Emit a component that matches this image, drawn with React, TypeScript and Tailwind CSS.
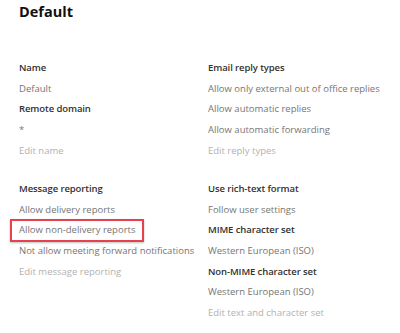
const font = { fontFamily: '"Open Sans", "Noto Sans", sans-serif' };

function Label({ children }: { children: React.ReactNode }) {
  return (
    <div className="h-[20.6px] flex items-center text-[9.5px] font-semibold text-[#323130] whitespace-nowrap tracking-[-0.1px]">
      {children}
    </div>
  );
}

function Value({ children }: { children: React.ReactNode }) {
  return (
    <div className="h-[20.6px] flex items-center text-[9.5px] text-[#777573] whitespace-nowrap">
      {children}
    </div>
  );
}

function EditLink({ children }: { children: React.ReactNode }) {
  return (
    <div className="h-[20.6px] flex items-center text-[9.5px] text-[#b3b1af] whitespace-nowrap">
      {children}
    </div>
  );
}

export default function App() {
  return (
    <div className="w-[400px] h-[333px] bg-white overflow-hidden" style={font}>
      <h1 className="pl-[19px] pt-[2px] text-[14.5px] font-bold text-[#111] leading-[20px]">
        Default
      </h1>
      <div className="grid grid-cols-[189px_1fr] pl-[19px] pt-[36px]">
        <div className="flex flex-col">
          <Label>Name</Label>
          <Value>Default</Value>
          <Label>Remote domain</Label>
          <Value>*</Value>
          <EditLink>Edit name</EditLink>
          <div className="h-[18px]" />
          <Label>Message reporting</Label>
          <Value>Allow delivery reports</Value>
          <div className="relative">
            <Value>Allow non-delivery reports</Value>
            <div className="absolute left-[-9px] top-[-1px] w-[134px] h-[23px] border-2 border-[#e5414f] shadow-[0_1px_2px_rgba(0,0,0,0.25)]" />
          </div>
          <Value>Not allow meeting forward notifications</Value>
          <EditLink>Edit message reporting</EditLink>
        </div>
        <div className="flex flex-col">
          <Label>Email reply types</Label>
          <Value>Allow only external out of office replies</Value>
          <Value>Allow automatic replies</Value>
          <Value>Allow automatic forwarding</Value>
          <EditLink>Edit reply types</EditLink>
          <div className="h-[18px]" />
          <Label>Use rich-text format</Label>
          <Value>Follow user settings</Value>
          <Label>MIME character set</Label>
          <Value>Western European (ISO)</Value>
          <Label>Non-MIME character set</Label>
          <Value>Western European (ISO)</Value>
          <EditLink>Edit text and character set</EditLink>
        </div>
      </div>
    </div>
  );
}
